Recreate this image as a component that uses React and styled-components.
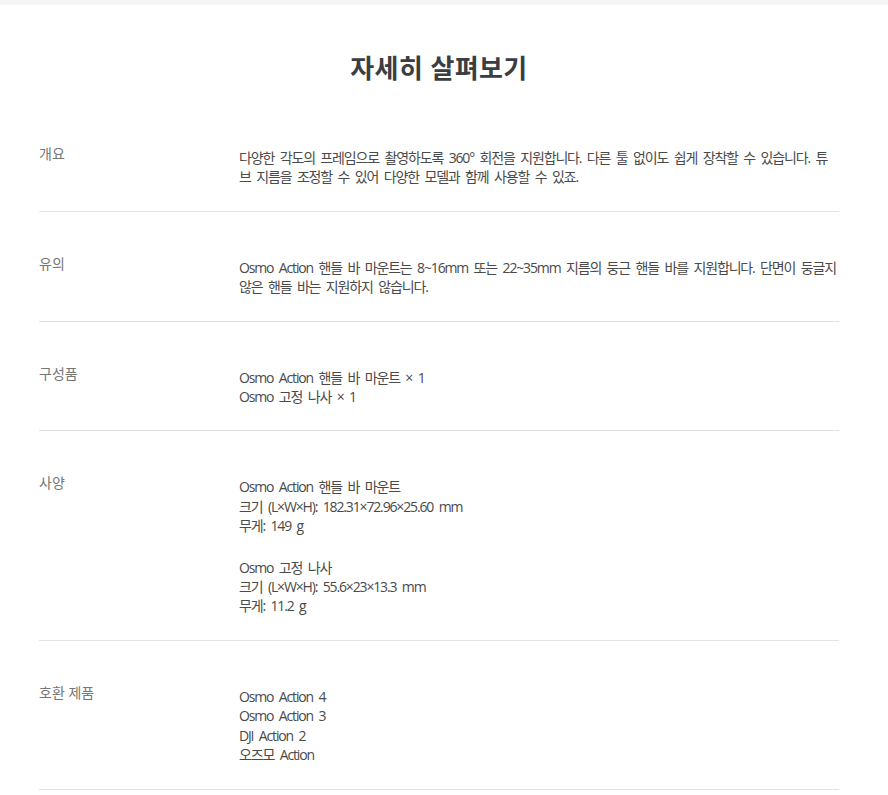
import React from "react";
import styled, { createGlobalStyle } from "styled-components";

const GlobalStyle = createGlobalStyle`
  body {
    margin: 0;
    background: #fff;
    font-family: "Open Sans", "Noto Sans CJK KR", sans-serif;
  }
`;

const specs = [
  {
    label: "개요",
    blocks: [
      [
        "다양한 각도의 프레임으로 촬영하도록 360° 회전을 지원합니다. 다른 툴 없이도 쉽게 장착할 수 있습니다. 튜브 지름을 조정할 수 있어 다양한 모델과 함께 사용할 수 있죠.",
      ],
    ],
  },
  {
    label: "유의",
    blocks: [
      [
        "Osmo Action 핸들 바 마운트는 8~16mm 또는 22~35mm 지름의 둥근 핸들 바를 지원합니다. 단면이 둥글지 않은 핸들 바는 지원하지 않습니다.",
      ],
    ],
  },
  {
    label: "구성품",
    blocks: [["Osmo Action 핸들 바 마운트 × 1", "Osmo 고정 나사 × 1"]],
  },
  {
    label: "사양",
    blocks: [
      [
        "Osmo Action 핸들 바 마운트",
        "크기 (L×W×H): 182.31×72.96×25.60 mm",
        "무게: 149 g",
      ],
      ["Osmo 고정 나사", "크기 (L×W×H): 55.6×23×13.3 mm", "무게: 11.2 g"],
    ],
  },
  {
    label: "호환 제품",
    blocks: [["Osmo Action 4", "Osmo Action 3", "DJI Action 2", "오즈모 Action"]],
  },
];

const Page = styled.div`
  border-top: 5px solid #f5f5f5;
`;

const Container = styled.div`
  width: 800px;
  margin-left: 39px;
`;

const Title = styled.h2`
  margin: 0;
  padding: 47px 0 18px;
  text-align: center;
  font-size: 26px;
  line-height: 32px;
  letter-spacing: 0.4px;
  font-weight: 700;
  color: #3b3e41;
`;

const Row = styled.div`
  display: grid;
  grid-template-columns: 200px 1fr;
  padding: 42px 0 24px;
  border-bottom: 1px solid #e3e3e3;
`;

const Label = styled.div`
  font-size: 14px;
  line-height: 20px;
  color: #767676;
`;

const Value = styled.div`
  margin-top: 4px;
  padding-right: 2.5px;
  font-size: 14px;
  line-height: 19.4px;
  letter-spacing: -1.15px;
  word-spacing: 3px;
  color: #4a4a4a;
`;

const Block = styled.p`
  margin: 0;
  & + & {
    margin-top: 22px;
  }
`;

const Line = styled.span`
  display: block;
`;

export default function App() {
  return (
    <Page>
      <GlobalStyle />
      <Container>
        <Title>자세히 살펴보기</Title>
        {specs.map((spec) => (
          <Row key={spec.label}>
            <Label>{spec.label}</Label>
            <Value>
              {spec.blocks.map((lines, i) => (
                <Block key={i}>
                  {lines.map((line) => (
                    <Line key={line}>{line}</Line>
                  ))}
                </Block>
              ))}
            </Value>
          </Row>
        ))}
      </Container>
    </Page>
  );
}
